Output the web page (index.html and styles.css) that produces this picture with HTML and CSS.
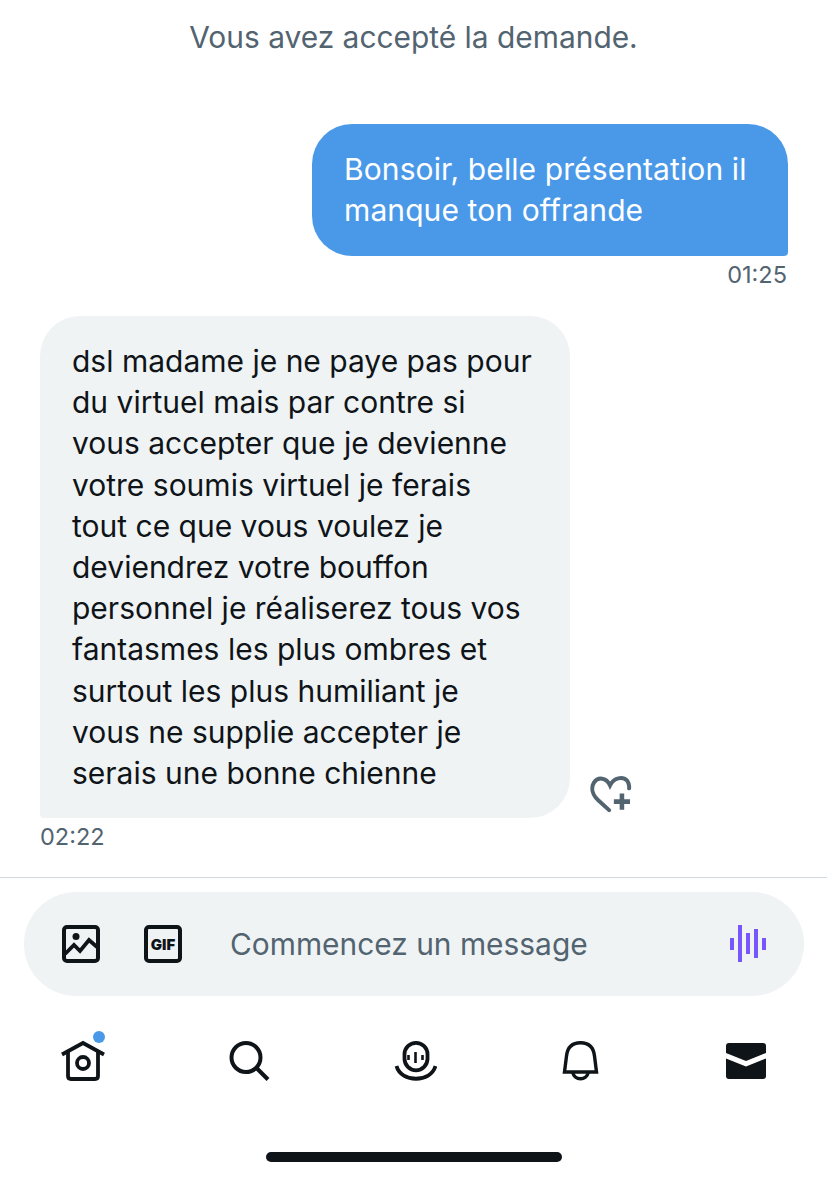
FILE: index.html
```html
<!DOCTYPE html>
<html lang="fr">
<head>
<meta charset="utf-8">
<title>Messages</title>
<link rel="stylesheet" href="styles.css">
</head>
<body>
<main class="thread">
  <p class="notice">Vous avez accepté la demande.</p>
  <div class="row row-out">
    <div class="bubble bubble-out">Bonsoir, belle présentation il<br>manque ton offrande</div>
    <div class="time time-out">01:25</div>
  </div>
  <div class="row row-in">
    <div class="bubble-line">
      <div class="bubble bubble-in">dsl madame je ne paye pas pour<br>du virtuel mais par contre si<br>vous accepter que je devienne<br>votre soumis virtuel je ferais<br>tout ce que vous voulez je<br>deviendrez votre bouffon<br>personnel je réaliserez tous vos<br>fantasmes les plus ombres et<br>surtout les plus humiliant je<br>vous ne supplie accepter je<br>serais une bonne chienne</div>
      <svg class="react" viewBox="0 0 44 40" fill="none" stroke="#536471" aria-hidden="true">
        <path d="M20 37 L8 26 C2 20 1 13 4 8 C8 2 17 2 21 11 C25 3 34 1 39 6 C41 9 41.500 11 41 14" stroke-width="4.200" stroke-linecap="round"/>
        <path d="M33.500 19.500 V36.500 M25 28 H42" stroke-width="4.800"/>
      </svg>
    </div>
    <div class="time">02:22</div>
  </div>
</main>
<section class="composer">
  <div class="input">
    <svg class="tool" viewBox="0 0 38 38" fill="none" stroke="#0f1419" aria-hidden="true">
      <rect x="2" y="2" width="34" height="34" rx="3" stroke-width="4"/>
      <circle cx="14" cy="11.500" r="3.500" fill="#0f1419" stroke="none"/>
      <path d="M3 29 L12 20 L18 26 L27 15 L35 22" stroke-width="3.800"/>
    </svg>
    <span class="tool tool-gif"><span class="gif-label">GIF</span></span>
    <span class="placeholder">Commencez un message</span>
    <svg class="voice" viewBox="0 0 38 38" fill="#7856ff" aria-hidden="true">
      <rect x="1" y="13" width="4" height="12"/>
      <rect x="9" y="0" width="4" height="37"/>
      <rect x="17" y="8" width="4" height="21"/>
      <rect x="25" y="4" width="4" height="29"/>
      <rect x="33" y="13" width="4" height="12"/>
    </svg>
  </div>
</section>
<nav class="tabs">
  <span class="tab tab-home">
    <svg class="tab-icon" viewBox="0 0 44 44" fill="none" stroke="#0f1419" stroke-width="3.800" aria-hidden="true">
      <path d="M1 15.500 L22 4 L43 15.500"/>
      <path d="M7 13 V37 Q7 40 10 40 H34 Q37 40 37 37 V13"/>
      <circle cx="22" cy="24" r="6"/>
    </svg>
    <span class="dot"></span>
  </span>
  <span class="tab">
    <svg class="tab-icon" viewBox="0 0 44 44" fill="none" stroke="#0f1419" stroke-width="4" aria-hidden="true">
      <circle cx="19" cy="18.500" r="14.500"/>
      <path d="M29.500 29 L41 40.500"/>
    </svg>
  </span>
  <span class="tab">
    <svg class="tab-icon" viewBox="0 0 44 44" fill="none" stroke="#0f1419" aria-hidden="true">
      <rect x="11.500" y="3.800" width="23" height="27.500" rx="11.500" stroke-width="3.800"/>
      <path d="M15.500 16 V21 M22.500 13 V24 M29.500 16 V21" stroke-width="2.600"/>
      <path d="M3.500 27 C8 44 38 44 42.500 27" stroke-width="3.800"/>
    </svg>
  </span>
  <span class="tab">
    <svg class="tab-icon" viewBox="0 0 44 44" fill="none" stroke="#0f1419" stroke-width="3.400" aria-hidden="true">
      <path d="M6.500 33 L8.500 17 C9.500 8 15 3.800 22.500 3.800 C30 3.800 35.500 8 36.500 17 L38.500 33 Z"/>
      <path d="M14.500 33 C16.500 42 28.500 42 30.500 33"/>
    </svg>
  </span>
  <span class="tab">
    <svg class="tab-icon" viewBox="0 0 44 44" aria-hidden="true">
      <path fill="#0f1419" d="M5 4 H39 Q42 4 42 7 V14 L22 22 L2 14 V7 Q2 4 5 4 Z M2 19.500 L22 27.500 L42 19.500 V37 Q42 40 39 40 H5 Q2 40 2 37 Z"/>
    </svg>
  </span>
</nav>
<div class="home-bar"></div>
</body>
</html>
```
FILE: styles.css
```css
* { box-sizing: border-box; }
html, body { margin: 0; padding: 0; }
body {
  width: 827px;
  height: 1177px;
  overflow: hidden;
  background: #fff;
  color: #0f1419;
  font-family: Inter, "Noto Sans", sans-serif;
}
.thread { height: 878px; padding: 0 39px 0 40px; border-bottom: 1px solid #cfd9de; }
.notice {
  margin: 0 -39px 0 -40px;
  padding-top: 19px;
  height: 124px;
  text-align: center;
  font-size: 29.900px;
  line-height: 36px;
  color: #536471;
}
.row { display: flex; flex-direction: column; }
.row-out { align-items: flex-end; }
.row-in { align-items: flex-start; margin-top: 26px; }
.bubble { font-size: 30px; line-height: 41.2px; }
.bubble-out {
  width: 476px;
  height: 132px;
  padding: 25px 20px 0 32px;
  background: #4a99e9;
  color: #fff;
  letter-spacing: 0.1px;
  border-radius: 40px 40px 4px 40px;
}
.bubble-in {
  width: 530px;
  height: 502px;
  padding: 25px 20px 0 32px;
  background: #eff3f4;
  border-radius: 40px 40px 40px 4px;
}
.bubble-line { display: flex; align-items: flex-end; }
.react { width: 42px; height: 38px; margin: 0 0 5px 20px; }
.time { margin-top: 4px; height: 30px; font-size: 23.500px; line-height: 30px; color: #536471; }
.time-out { margin-right: 1px; }
.composer { padding: 14px 23px 0 24px; }
.input {
  display: flex;
  align-items: center;
  height: 104px;
  padding: 0 37px 0 38px;
  background: #eff3f4;
  border-radius: 52px;
}
.tool { width: 38px; height: 38px; flex: none; }
.tool-gif {
  display: flex;
  align-items: center;
  justify-content: center;
  margin-left: 44px;
  border: 4px solid #0f1419;
  border-radius: 5px;
}
.gif-label { font-size: 15px; font-weight: 900; color: #0f1419; }
.placeholder { flex: 1; margin-left: 48px; font-size: 29.900px; color: #536471; }
.voice { width: 38px; height: 38px; flex: none; }
.tabs { display: flex; justify-content: space-between; padding: 43px 59px 0 61px; }
.tab { position: relative; display: block; width: 44px; height: 44px; }
.tab-icon { display: block; width: 44px; height: 44px; }
.dot {
  position: absolute;
  top: -8px;
  right: 0;
  width: 12px;
  height: 12px;
  border-radius: 50%;
  background: #4a99e9;
}
.home-bar { width: 296px; height: 10px; margin: 69px 0 0 266px; border-radius: 5px; background: #0f1419; }
```
